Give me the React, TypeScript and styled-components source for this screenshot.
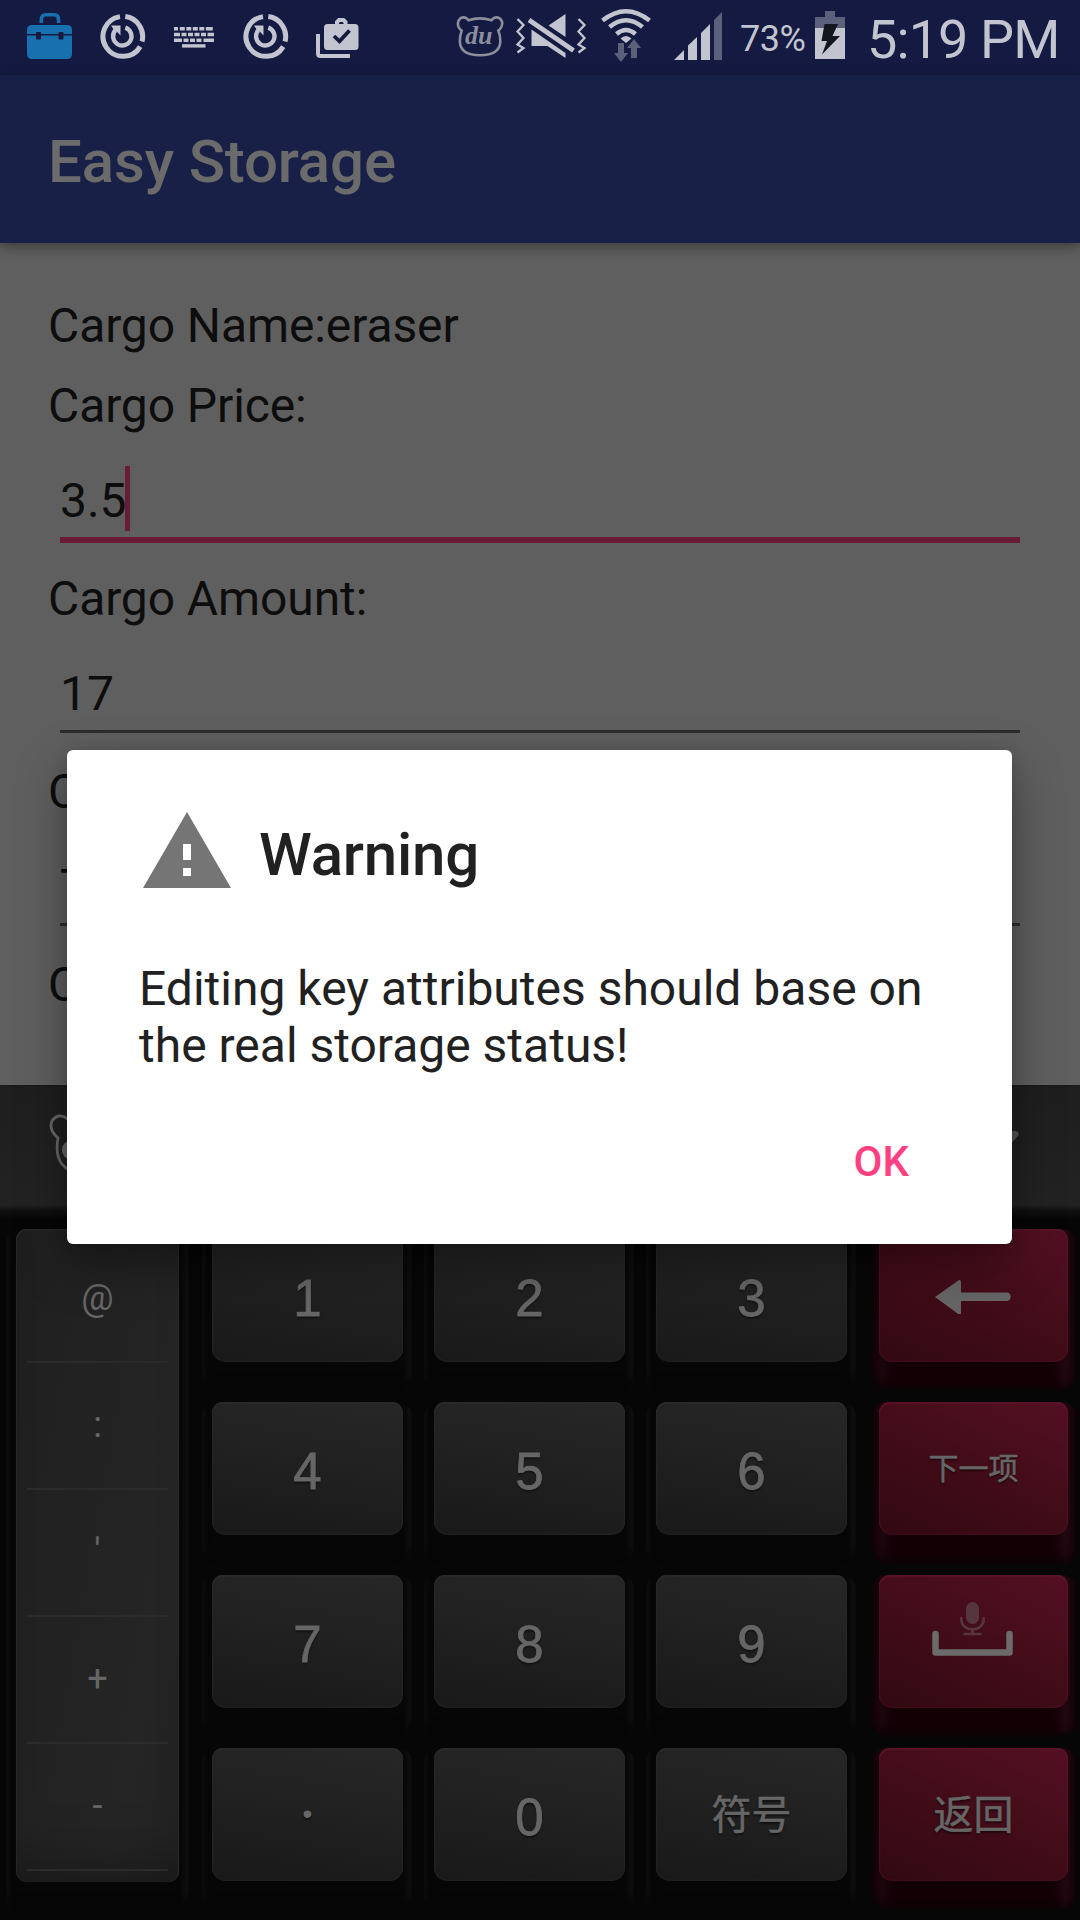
import React from "react";
import styled, { createGlobalStyle, css } from "styled-components";

const GlobalStyle = createGlobalStyle`
  * { box-sizing: border-box; }
  body { margin: 0; background: #060606; }
`;

const Screen = styled.div`
  position: relative;
  width: 1080px;
  height: 1920px;
  overflow: hidden;
  display: flex;
  flex-direction: column;
  background: #5f5f5f;
  font-family: Roboto, "Liberation Sans", sans-serif;
`;

/* ---------- status bar ---------- */

const StatusBar = styled.header`
  flex: none;
  display: flex;
  justify-content: space-between;
  height: 75px;
  padding: 0 24px 0 27px;
  background: #141a41;
  color: #c2c4cf;
`;

const StatusGroup = styled.div<{ $gap?: number }>`
  display: flex;
  gap: ${(p) => p.$gap ?? 0}px;
`;

const StatusGlyph = styled.svg<{ $before?: number }>`
  flex: none;
  display: block;
  height: 75px;
  margin-left: ${(p) => p.$before ?? 0}px;
`;

const BatteryText = styled.span`
  width: 74px;
  margin-left: 17px;
  font-size: 36px;
  line-height: 79px;
  letter-spacing: -0.5px;
  white-space: nowrap;
`;

const Clock = styled.span`
  width: 189px;
  margin-left: 22px;
  font-size: 54px;
  line-height: 80px;
  letter-spacing: -0.9px;
  white-space: nowrap;
`;

/* ---------- app bar ---------- */

const AppBar = styled.div`
  flex: none;
  position: relative;
  display: flex;
  align-items: center;
  height: 168px;
  padding: 6px 48px 0;
  background: #192047;
  box-shadow: 0 4px 12px rgba(0, 0, 0, 0.38);
`;

const AppTitle = styled.h1`
  margin: 0;
  font-size: 60px;
  font-weight: 500;
  line-height: 70px;
  letter-spacing: -0.15px;
  color: #6b6b6b;
`;

/* ---------- form ---------- */

const Form = styled.main`
  flex: none;
  display: flex;
  flex-direction: column;
  height: 842px;
  padding: 55px 48px 0;
  overflow: hidden;
  font-size: 48px;
  line-height: 56px;
  letter-spacing: -0.1px;
  color: #0d0d0d;
`;

const Label = styled.div<{ $after?: number }>`
  flex: none;
  height: 56px;
  margin-bottom: ${(p) => p.$after ?? 0}px;
  white-space: nowrap;
`;

const Field = styled.div`
  flex: none;
  display: flex;
  flex-direction: column;
  height: 137px;
  padding: 32px 12px 0;
`;

const Value = styled.div`
  display: flex;
  align-items: center;
  height: 71px;
  padding: 0 0 1px;
`;

const Caret = styled.span`
  width: 5px;
  height: 65px;
  margin: 0 0 5px -1px;
  background: #691c35;
`;

const Underline = styled.div<{ $focused?: boolean }>`
  height: ${(p) => (p.$focused ? 6 : 3)}px;
  background: ${(p) => (p.$focused ? "#691c35" : "#2c2c2c")};
`;

/* ---------- keyboard ---------- */

const Keyboard = styled.section`
  flex: none;
  display: flex;
  flex-direction: column;
  height: 835px;
  background: #060606;
  color: #666;
`;

const KeyboardHeader = styled.div`
  flex: none;
  display: flex;
  justify-content: space-between;
  height: 134px;
  padding: 28px 61px 0 49px;
  background: linear-gradient(#191919 0, #1e1e1e 2px, #222 120px, #111 125px, #060606 134px);
`;

const KeyArea = styled.div`
  display: flex;
  padding: 10px 0 0 6px;
`;

const sideWalls = css`
  background: linear-gradient(90deg, #0f0f0f, #060606 6px, #060606 calc(100% - 9px), #101010 calc(100% - 2px), #0b0b0b);
  box-shadow: inset 0 -12px 10px -4px #060606;
`;

const SymbolKey = styled.div`
  width: 183px;
  height: 682px;
  padding: 0 10px;
  border-radius: 14px;
  ${sideWalls}
`;

const SymbolFace = styled.div`
  height: 653px;
  padding: 0 11px;
  border-radius: 11px;
  background: linear-gradient(100deg, #1f1f1f, #252525 75%, #222);
  box-shadow: inset 0 1px 2px #2e2e2e, inset -1px 0 1px #2c2c2c, inset 1px 0 1px #272727,
    inset 0 -55px 50px -30px rgba(0, 0, 0, 0.25);
`;

const SymbolCell = styled.div<{ $first?: boolean }>`
  height: ${(p) => (p.$first ? 134 : 127)}px;
  padding-top: ${(p) => (p.$first ? 48 : 41)}px;
  border-bottom: 2px solid #2b2b2b;
  font-size: 36px;
  line-height: 42px;
  text-align: center;
`;

const KeyGrid = styled.div`
  display: grid;
  grid-template-columns: 222px 222px 226px 204px;
  grid-auto-rows: 173px;
  margin-left: 13px;
`;

const Key = styled.div<{ $accent?: boolean }>`
  width: ${(p) => (p.$accent ? 204 : 210)}px;
  height: 162px;
  padding: ${(p) => (p.$accent ? "0 8px 0 7px" : "0 9px 0 10px")};
  border-radius: 14px;
  ${(p) =>
    p.$accent
      ? css`
          background: linear-gradient(90deg, #130207, #1a060c 10px, #130004 22px, #130004 182px, #220810 193px, #150208);
          box-shadow: inset 0 -8px 8px -4px #080406;
        `
      : sideWalls}
`;

const faceGrey = css`
  background: linear-gradient(190deg, #272727, #202020 50%, #191919);
  box-shadow: inset 0 2px 2px #2a2a2a, inset 0 0 3px #2b2b2b;
`;

const faceRed = css`
  background: linear-gradient(205deg, #541023, #430c19 48%, #310911);
  box-shadow: inset 0 2px 2px #5a1529, inset 0 0 3px #55142a;
`;

const Face = styled.div<{ $accent?: boolean }>`
  display: flex;
  align-items: center;
  justify-content: center;
  height: 133px;
  border-radius: 11px 11px 14px 14px / 11px 11px 13px 13px;
  ${(p) => (p.$accent ? faceRed : faceGrey)}
`;

const Digit = styled.span`
  padding-top: 6px;
  font-family: "Liberation Sans", Arial, sans-serif;
  font-size: 51px;
  line-height: 58px;
  -webkit-text-stroke: 0.8px #666;
  text-shadow: 0 2px 2px #111;
`;

const Dot = styled(Digit)`
  padding: 0 0 2px;
  font-size: 28px;
  line-height: 32px;
  -webkit-text-stroke: 0;
`;

const Hanzi = styled.span<{ $size: number }>`
  padding-bottom: 5px;
  font-family: "Noto Sans CJK SC", sans-serif;
  font-size: ${(p) => p.$size}px;
  line-height: 60px;
  white-space: nowrap;
  -webkit-text-stroke: 0.5px #666;
  text-shadow: 0 2px 2px rgba(0, 0, 0, 0.5);
`;

const KeyGlyph = styled.svg`
  display: block;
  flex: none;
`;

/* ---------- dialog ---------- */

const Dialog = styled.div`
  position: absolute;
  left: 67px;
  top: 750px;
  width: 945px;
  height: 494px;
  padding: 54px 72px 0;
  border-radius: 6px;
  background: #fff;
  color: #212121;
  box-shadow: 0 20px 50px rgba(0, 0, 0, 0.35), 0 0 14px rgba(0, 0, 0, 0.12);
`;

const DialogHead = styled.div`
  display: flex;
  align-items: center;
  gap: 24px;
  height: 96px;
`;

const DialogTitle = styled.h2`
  margin: 0;
  padding-top: 5px;
  font-size: 60px;
  font-weight: 500;
  line-height: 70px;
  letter-spacing: -0.2px;
`;

const Message = styled.p`
  margin: 60px 0 0;
  font-size: 48px;
  line-height: 57px;
  white-space: nowrap;
`;

const DialogActions = styled.div`
  display: flex;
  justify-content: flex-end;
  padding: 63px 31px 0 0;
`;

const DialogButton = styled.button`
  padding: 0;
  border: 0;
  background: none;
  font-family: inherit;
  font-size: 42px;
  font-weight: 500;
  line-height: 50px;
  color: #ff4081;
`;

/* ---------- icons ---------- */

const SyncRing = () => (
  <StatusGlyph width={46} viewBox="100 0 46 75">
    <g fill="none" stroke="#c2c4cf">
      <path d="M120 16.600A20 20 0 1 0 140.200 46.600" strokeWidth="5" />
      <path d="M125.300 16.600A20 20 0 0 1 142 41.500" strokeWidth="5" />
      <path d="M125.300 27.600A9.200 9.200 0 1 1 115.300 30.300" strokeWidth="4.400" />
    </g>
    <path d="M111 25.500H120.500V35.500L117.300 32L114 30Z" fill="#c2c4cf" />
  </StatusGlyph>
);

const bearPath =
  "M468.5 20.3Q480 16.500 491.500 20.300Q495 15.800 499.500 18.200Q503.800 21.500 501.300 27Q500 29.500 498.300 30.600Q500.500 36 500.300 42Q499.500 55.200 480 55.200Q460.500 55.200 459.900 42Q459.700 36 461.700 30.600Q459.800 29.500 458.600 27Q456.500 21.500 460.500 18.200Q465 15.800 468.500 20.300Z";

const symbols = ["@", ":", "'", "+", "-"];

const rows: string[][] = [
  ["1", "2", "3", "delete"],
  ["4", "5", "6", "下一项"],
  ["7", "8", "9", "space"],
  ["•", "0", "符号", "返回"],
];

const KeyContent = ({ name }: { name: string }) => {
  if (name === "delete")
    return (
      <KeyGlyph width={78} height={36} viewBox="935 1278 78 36">
        <path d="M935 1297L959 1280Q961 1279.500 961 1282V1292.500H1007A4.300 4.300 0 0 1 1007 1301H961V1313Q961 1315.500 959 1314.500Z" fill="#666" />
      </KeyGlyph>
    );
  if (name === "space")
    return (
      <KeyGlyph width={82} height={82} viewBox="933 1600 82 82" overflow="visible">
        <path d="M935.500 1633V1651.500H1009.500V1633" fill="none" stroke="#6b6b6b" strokeWidth="6.500" strokeLinecap="round" strokeLinejoin="round" />
        <rect x="966" y="1601" width="13" height="22" rx="6.500" fill="#57353f" />
        <path d="M961.300 1617V1618.500A11.200 9.800 0 0 0 983.700 1618.500V1617M972.500 1628V1633M964.500 1633H980.500" fill="none" stroke="#57353f" strokeWidth="2.600" strokeLinecap="round" />
      </KeyGlyph>
    );
  if (name === "•") return <Dot>{name}</Dot>;
  if (name.length > 1) return <Hanzi $size={name.length > 2 ? 30 : 40}>{name}</Hanzi>;
  return <Digit>{name}</Digit>;
};

export default function App() {
  return (
    <Screen>
      <GlobalStyle />
      <StatusBar>
        <StatusGroup $gap={27.5}>
          <StatusGlyph width={45} viewBox="27 0 45 75">
            <path d="M41.300 23V20Q41.300 14.700 46 14.700H54Q58.600 14.700 58.600 20V23" fill="none" stroke="#1870ae" strokeWidth="3.600" />
            <path d="M32 25H67Q72 25 72 30V34H27V30Q27 25 32 25Z" fill="#1870ae" />
            <path d="M27 35.500H72V54Q72 59 67 59H32Q27 59 27 54Z" fill="#1870ae" />
            <rect x="36" y="32" width="5" height="7.500" rx="1" fill="#141a41" />
            <rect x="58.500" y="32" width="5" height="7.500" rx="1" fill="#141a41" />
          </StatusGlyph>
          <SyncRing />
          <StatusGlyph width={42} viewBox="173 0 42 75">
            <g fill="none" stroke="#c2c4cf" strokeWidth="3.400">
              <path d="M174 28.700H214" strokeDasharray="4 1.800 5 1.500 5 1.500 5 1.500 5 1.500 7 9" />
              <path d="M174 34.500H214" strokeDasharray="6 1.500 5 1.500 5 1.500 5 1.500 5 1.500 7 9" />
              <path d="M174 40.200H214" strokeDasharray="8 1.500 5 1.500 5 1.500 5 2 11 9" />
              <path d="M182 45.900H205.500" />
            </g>
          </StatusGlyph>
          <SyncRing />
          <StatusGlyph width={44} viewBox="317 0 44 75">
            <path d="M319 34V53.500Q319 56 321.500 56H351" fill="none" stroke="#c2c4cf" strokeWidth="4" />
            <path d="M338 25V22L340 20H344.500L346.500 22V25" fill="none" stroke="#c2c4cf" strokeWidth="4" />
            <rect x="325" y="24" width="34.500" height="26" rx="3.500" fill="#c2c4cf" />
            <path d="M335 36L340.500 41.300L350.500 30.500" fill="none" stroke="#141a41" strokeWidth="3.800" />
          </StatusGlyph>
        </StatusGroup>
        <StatusGroup>
          <StatusGlyph width={48} viewBox="456 0 48 75">
            <path d={bearPath} fill="none" stroke="#8c8e9d" strokeWidth="2.600" />
            <text x="465" y="43.500" fontFamily="Liberation Serif, serif" fontStyle="italic" fontWeight="700" fontSize="26" fill="#8c8e9d">du</text>
          </StatusGlyph>
          <StatusGlyph width={72} viewBox="515.5 0 72 75" $before={11}>
            <g fill="none" stroke="#c2c4cf" strokeWidth="2.300">
              <path d="M518 19L524 25L518 31.500L524 38L518 44.500L524 48L518 52.500" />
              <path d="M579 19L585 25L579 31.500L585 38L579 44.500L585 48L579 52.500" />
              <path d="M529.500 20L574 50.500" strokeWidth="4.800" />
            </g>
            <path d="M549 25.500L566 14V37Z" fill="#c2c4cf" />
            <path d="M532 29.500L566 53V58L548 46H532Z" fill="#c2c4cf" />
          </StatusGlyph>
          <StatusGlyph width={52} viewBox="600 0 52 75" $before={13}>
            <g fill="none" stroke="#c2c4cf">
              <path d="M602.500 20.500Q626 2 649.500 20.500" strokeWidth="4.500" />
              <path d="M609.500 27Q626 13.500 642.500 27" strokeWidth="4.500" />
              <path d="M616.500 34Q626 26 635.500 34" strokeWidth="4.500" />
            </g>
            <path d="M620.500 38.500Q626 33.500 631.500 38.500L626 43Z" fill="#c2c4cf" />
            <path d="M618 43H624V53H628L621 62L614 53H618Z" fill="#5c617b" />
            <path d="M634 39L641 48H637V58H631V48H627Z" fill="#5c617b" />
          </StatusGlyph>
          <StatusGlyph width={50} viewBox="673 0 50 75" $before={21}>
            <path d="M674 60L684 50V60ZM688 60V45.500L697 37V60ZM701 60V33L710 24V60Z" fill="#c2c4cf" />
            <path d="M714 60V20L722 12V60Z" fill="#5c617b" />
          </StatusGlyph>
          <BatteryText>73%</BatteryText>
          <StatusGlyph width={30} viewBox="815 0 30 75" $before={1}>
            <path d="M815 29V17H825V11H835V17H845V29Z" fill="#5c617b" />
            <path d="M815 28H845V59H815Z" fill="#c2c4cf" />
            <path d="M824.500 24H838L832.500 36H840L822 54.500L827 41H821.500Z" fill="#14161f" />
          </StatusGlyph>
          <Clock>5:19 PM</Clock>
        </StatusGroup>
      </StatusBar>

      <AppBar>
        <AppTitle>Easy Storage</AppTitle>
      </AppBar>

      <Form>
        <Label $after={24}>Cargo Name:eraser</Label>
        <Label>Cargo Price:</Label>
        <Field>
          <Value>
            3.5
            <Caret />
          </Value>
          <Underline $focused />
        </Field>
        <Label>Cargo Amount:</Label>
        <Field>
          <Value>17</Value>
          <Underline />
        </Field>
        <Label>C</Label>
        <Field>
          <Value>T</Value>
          <Underline />
        </Field>
        <Label>C</Label>
      </Form>

      <Keyboard>
        <KeyboardHeader>
          <KeyGlyph width={72} height={62} viewBox="49 1113 72 62">
            <path d="M68 1119Q85 1114 102 1119Q110 1112 116 1119Q120 1128 114 1135L112 1138Q116 1172 85 1173.500Q52 1172 58 1138L55 1135Q49 1128 52 1121Q58 1112 68 1119Z" fill="none" stroke="#666" strokeWidth="2.800" />
            <ellipse cx="69.500" cy="1150" rx="7.500" ry="9" fill="#666" />
          </KeyGlyph>
          <KeyGlyph width={50} height={40} viewBox="968 1113 50 40">
            <path d="M974 1131H1015Q1019 1132 1017 1136L1002 1152H992L971 1136Z" fill="#555" />
          </KeyGlyph>
        </KeyboardHeader>
        <KeyArea>
          <SymbolKey>
            <SymbolFace>
              {symbols.map((s, i) => (
                <SymbolCell key={s} $first={i === 0}>
                  {s}
                </SymbolCell>
              ))}
            </SymbolFace>
          </SymbolKey>
          <KeyGrid>
            {rows.flat().map((name, i) => {
              const accent = i % 4 === 3;
              return (
                <Key key={name} $accent={accent}>
                  <Face $accent={accent}>
                    <KeyContent name={name} />
                  </Face>
                </Key>
              );
            })}
          </KeyGrid>
        </KeyArea>
      </Keyboard>

      <Dialog role="alertdialog">
        <DialogHead>
          <KeyGlyph width={96} height={96} viewBox="0 0 24 24">
            <path d="M1 21h22L12 2 1 21zm12-3h-2v-2h2v2zm0-4h-2v-4h2v4z" fill="#757575" />
          </KeyGlyph>
          <DialogTitle>Warning</DialogTitle>
        </DialogHead>
        <Message>
          Editing key attributes should base on
          <br />
          the real storage status!
        </Message>
        <DialogActions>
          <DialogButton>OK</DialogButton>
        </DialogActions>
      </Dialog>
    </Screen>
  );
}
